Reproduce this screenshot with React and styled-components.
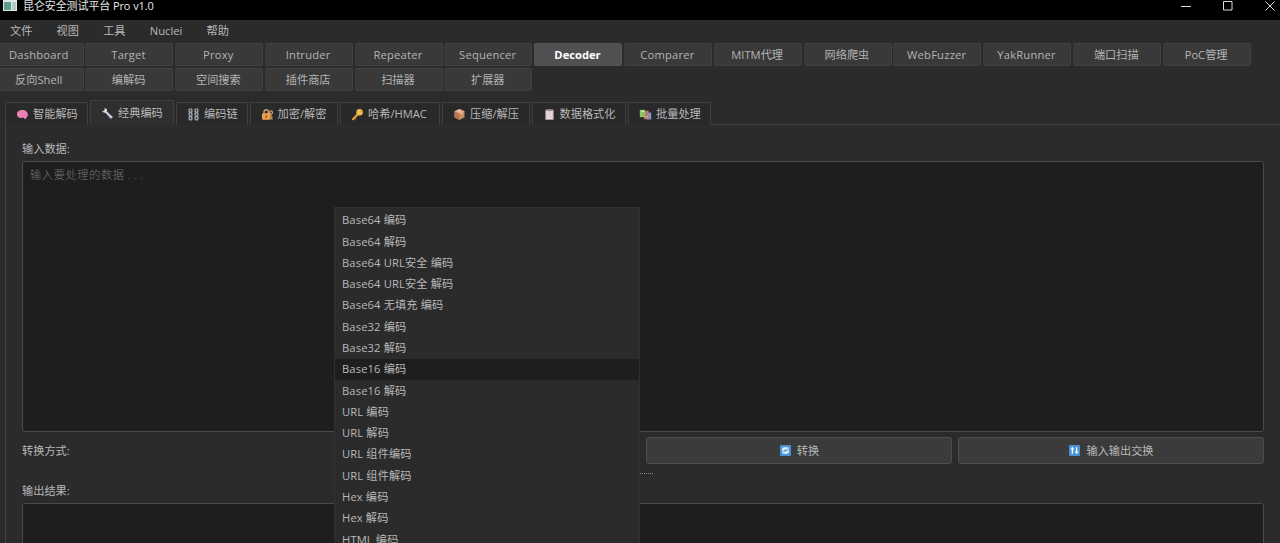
import React from "react";
import styled, { createGlobalStyle } from "styled-components";

const GlobalStyle = createGlobalStyle`
  * {
    box-sizing: border-box;
  }
  body {
    margin: 0;
    background: #2b2b2b;
    overflow: hidden;
  }
`;

const Window = styled.div`
  width: 1280px;
  height: 543px;
  overflow: hidden;
  display: flex;
  flex-direction: column;
  background: #2b2b2b;
  color: #b8b8b8;
  font-family: "Open Sans", "Noto Sans CJK SC", sans-serif;
  font-size: 11.2px;
  line-height: 16px;
  white-space: nowrap;
`;

const TitleBar = styled.header`
  height: 20px;
  flex-shrink: 0;
  padding: 0 5px 8px 3px;
  display: flex;
  align-items: center;
  background: #000;
  color: #e6e6e6;
  font-size: 11px;
  line-height: 12px;
`;

const Title = styled.span`
  margin-left: 6px;
  flex: 1;
  letter-spacing: -0.1px;
`;

const WindowButtons = styled.div`
  display: flex;
  gap: 32px;
`;

const MenuBar = styled.nav`
  height: 23px;
  flex-shrink: 0;
  display: flex;
  align-items: center;
  gap: 24.2px;
  padding: 0 0 1px 10px;
`;

const TabGrid = styled.div`
  display: grid;
  grid-template-columns: repeat(14, 88px);
  grid-auto-rows: 23.4px;
  gap: 1.4px 1.8px;
  margin-left: -4.5px;
  flex-shrink: 0;
`;

const ModuleTab = styled.div`
  display: flex;
  align-items: center;
  justify-content: center;
  padding: 1px 1.5px 0 0;
  border: 1px solid ${(p) => (p.$active ? "#555" : "#414141")};
  border-left-color: ${(p) => (p.$active ? "#555" : "#393939")};
  border-radius: 2px;
  background: ${(p) => (p.$active ? "#505050" : "#393939")};
  color: ${(p) => (p.$active ? "#fff" : "#b4b4b4")};
  font-weight: ${(p) => (p.$active ? 700 : 400)};
  letter-spacing: ${(p) => p.$spacing || 0}px;
`;

const SubTabs = styled.div`
  display: flex;
  align-items: flex-end;
  height: 33.8px;
  flex-shrink: 0;
  padding-left: 5px;
  gap: 2px;
`;

const SubTab = styled.div`
  width: ${(p) => p.$width}px;
  height: ${(p) => (p.$active ? 25 : 23)}px;
  padding: ${(p) => (p.$active ? "1px 0 0 10px" : "1px 0 0 10px")};
  display: flex;
  align-items: center;
  gap: 4px;
  border: 1px solid #3e3e3e;
  border-bottom: 0;
  background: ${(p) => (p.$active ? "#2f2f2f" : "#292929")};
  svg {
    flex-shrink: 0;
  }
`;

const TabRule = styled.div`
  flex: 1;
  margin-left: -2px;
  height: 1px;
  background: #444;
`;

const Pane = styled.main`
  flex: 1;
  min-height: 0;
  display: flex;
  flex-direction: column;
  margin-left: 5px;
  padding: 16px 16px 0;
  border-left: 1px solid #444;
`;

const Label = styled.div`
  flex-shrink: 0;
  height: 16px;
  margin-bottom: 4px;
`;

const TextBox = styled.div`
  flex-shrink: 0;
  height: ${(p) => p.$height}px;
  padding: 5px 7px;
  border: 1px solid #4a4a4a;
  border-radius: 3px;
  background: #1e1e1e;
  color: #757575;
  font-weight: 300;
  letter-spacing: 0.65px;
`;

const Dots = styled.span`
  letter-spacing: 3.6px;
  margin-left: 3px;
`;

const Controls = styled.div`
  display: grid;
  grid-template-columns: repeat(4, 1fr);
  gap: 6px;
  height: 27px;
  flex-shrink: 0;
  margin-top: 5px;
  align-items: center;
`;

const Caption = styled.span`
  padding-top: 1px;
`;

const ComboBox = styled.div`
  height: 27px;
  border: 1px solid #4a4a4a;
  position: relative;
`;

const Popup = styled.div`
  position: absolute;
  z-index: 2;
  left: -1px;
  top: -231px;
  width: 306px;
  padding: 1.6px 0;
  border: 1px solid #303030;
  background: #2b2b2b;
`;

const Option = styled.div`
  height: 21.3px;
  padding-left: 7px;
  display: flex;
  align-items: center;
  letter-spacing: 0.13px;
  background: ${(p) => (p.$active ? "#1e1e1e" : "transparent")};
`;

const Button = styled.div`
  height: 27px;
  display: flex;
  align-items: center;
  justify-content: center;
  gap: 5px;
  padding-top: 1px;
  border: 1px solid #4e4e4e;
  border-radius: 3px;
  background: #3b3b3b;
`;

const Splitter = styled.div`
  height: 19px;
  flex-shrink: 0;
  display: flex;
  align-items: center;
  justify-content: center;
  gap: 1px;
`;

const Grip = styled.i`
  width: 1px;
  height: 1px;
  background: #858585;
`;

const Svg = ({ children }) => (
  <svg width="13" height="13" viewBox="0 0 13 13" fill="none">
    {children}
  </svg>
);

const icons = {
  brain: (
    <Svg>
      <path d="M1 6.5C.8 3.4 3.5 1.9 6.3 2c3 0 5.4 2 5.6 4.7.1 1.3-.4 2-1.3 2.3l-.5 1.8-1.5.2-1-1.5C4.5 10.4 1.2 9.9 1 6.5Z" fill="#ee83b5" />
      <path d="M3 5.8c1-.9 2-.4 2.5.3M6.2 3.8c.6 1 1.6 1.1 2.4.8M7 7.4c1 .3 2 .1 2.8-.8" stroke="#d96fa4" strokeWidth=".6" />
    </Svg>
  ),
  wrench: (
    <Svg>
      <path d="m4 4 5.4 5.4" stroke="#c9ced9" strokeWidth="2.2" strokeLinecap="round" />
      <path d="M1.2 3.5 3 4.2l1-1L3.3 1.4c1.8-.3 3 .9 2.7 2.6L4.4 5.6C2.8 5.9 1.2 5 1.2 3.5Z" fill="#d9dce5" />
      <circle cx="10" cy="10" r="1.6" fill="#c1c7d5" />
    </Svg>
  ),
  chains: (
    <Svg>
      {[3.5, 9.5].map((x) => (
        <g key={x} stroke="#a9b4bf" strokeWidth="1.2">
          <rect x={x - 1.4} y="1" width="2.8" height="3.2" rx=".8" />
          <rect x={x - 1.4} y="5" width="2.8" height="3" rx=".8" />
          <rect x={x - 1.4} y="8.8" width="2.8" height="3" rx=".8" />
        </g>
      ))}
    </Svg>
  ),
  lock: (
    <Svg>
      <path d="M3 6V4a2.2 2.2 0 0 1 4.4 0v2" stroke="#c7a077" strokeWidth="1.4" />
      <rect x="1" y="5.2" width="8.4" height="6.6" rx="1" fill="#eda34c" />
      <path d="M5.2 7.3v2.4" stroke="#7c4b25" strokeWidth="1.3" />
      <circle cx="10" cy="4.4" r="1.5" stroke="#d7a16c" strokeWidth="1.2" />
      <path d="M10 6v5.4M10 9h1.7M10 11h1.7" stroke="#d7a16c" strokeWidth="1.1" />
    </Svg>
  ),
  key: (
    <Svg>
      <path d="M7 6 2 11.2" stroke="#e5a93b" strokeWidth="2" strokeLinecap="round" />
      <path d="m3 9.5 1.7 1.6" stroke="#e5a93b" />
      <circle cx="8.6" cy="4.2" r="3.2" fill="#f3bf52" />
      <circle cx="9.8" cy="3" r=".6" fill="#a87a2c" />
    </Svg>
  ),
  box: (
    <Svg>
      <path d="m6.5 1 5 2.3v6L6.5 12l-5-2.7v-6Z" fill="#c98b68" />
      <path d="m1.5 3.3 5 2.4V12l-5-2.7Z" fill="#b77553" />
      <path d="m1.5 3.3 5-2.3 5 2.3-5 2.4Z" fill="#dda782" />
      <path d="m4 2.2 5 2.4v2" stroke="#f0cfad" strokeWidth="1" />
    </Svg>
  ),
  clipboard: (
    <Svg>
      <rect x="2.2" y="1.6" width="8.6" height="10.4" rx=".8" fill="#b58e91" />
      <path d="M3.2 2.8h6.6v8.2H3.2Z" fill="#e4dce4" />
      <path d="M4.7 1h3.6v2.2H4.7Z" fill="#8e8490" />
      <path d="M4.4 5.3h4.2M4.4 7h4.2M4.4 8.7h4.2" stroke="#cfc4d0" strokeWidth=".6" />
    </Svg>
  ),
  books: (
    <Svg>
      <path d="M7.5 4.5h4.7v7H7.5Z" fill="#7898d0" />
      <path d="m4.5 3.2 5-.6.6 8.3-5 .4Z" fill="#bd747d" />
      <path d="M.8 1.8h5.4v7.4H.8Z" fill="#8fc463" />
      <path d="M2 3.3h3M7.3 8.9l1.5-.1" stroke="#e1edd0" strokeWidth="1" />
    </Svg>
  ),
  refresh: (
    <Svg>
      <rect x="1" y="1" width="11" height="11" rx="1" fill="#4b92d6" />
      <rect x="3" y="3" width="7" height="7" rx="2" fill="#a9cff2" />
      <path d="M3.6 6c.3-1.8 3.2-2.6 4.9-1.3M9.4 7c-.3 1.8-3.2 2.6-4.9 1.3" stroke="#eef7ff" strokeWidth="1.2" />
      <path d="m4.8 7.6 3.4-2.2" stroke="#3f86c9" strokeWidth="1" />
    </Svg>
  ),
  swap: (
    <Svg>
      <rect x="1" y="1" width="11" height="11" rx="1" fill="#4b92d6" />
      <path d="M4.4 9.8V4.5M8.6 3.2v5.3" stroke="#eef7ff" strokeWidth="1.4" />
      <path d="m2.3 5.4 2.1-2.6 2.1 2.6ZM6.5 7.6l2.1 2.6 2.1-2.6Z" fill="#eef7ff" />
    </Svg>
  ),
};

const menus = ["文件", "视图", "工具", "Nuclei", "帮助"];

const modules = [
  "Dashboard",
  "Target",
  "Proxy",
  "Intruder",
  "Repeater",
  "Sequencer",
  "Decoder",
  "Comparer",
  "MITM代理",
  "网络爬虫",
  "WebFuzzer",
  "YakRunner",
  "端口扫描",
  "PoC管理",
  "反向Shell",
  "编解码",
  "空间搜索",
  "插件商店",
  "扫描器",
  "扩展器",
];

const subTabs = [
  { icon: "brain", text: "智能解码", width: 83 },
  { icon: "wrench", text: "经典编码", width: 84 },
  { icon: "chains", text: "编码链", width: 71.5 },
  { icon: "lock", text: "加密/解密", width: 88.5 },
  { icon: "key", text: "哈希/HMAC", width: 100 },
  { icon: "box", text: "压缩/解压", width: 87.5 },
  { icon: "clipboard", text: "数据格式化", width: 94.5 },
  { icon: "books", text: "批量处理", width: 82.5 },
];

const options = [
  "Base64 编码",
  "Base64 解码",
  "Base64 URL安全 编码",
  "Base64 URL安全 解码",
  "Base64 无填充 编码",
  "Base32 编码",
  "Base32 解码",
  "Base16 编码",
  "Base16 解码",
  "URL 编码",
  "URL 解码",
  "URL 组件编码",
  "URL 组件解码",
  "Hex 编码",
  "Hex 解码",
  "HTML 编码",
];

const AppIcon = () => (
  <svg width="14" height="12" viewBox="0 0 14 12">
    <path d="M0 0h14v11H0Z" fill="#dce8e5" />
    <path d="M1 2h7v8H1Z" fill="#5c9c8a" />
    <path d="M9 2h4v8H9Z" fill="#b7c9c5" />
  </svg>
);

export default function App() {
  return (
    <Window>
      <GlobalStyle />
      <TitleBar>
        <AppIcon />
        <Title>昆仑安全测试平台 Pro v1.0</Title>
        <WindowButtons>
          <svg width="10" height="10" stroke="#ddd" fill="none">
            <path d="M0 5.5h10" />
          </svg>
          <svg width="10" height="10" stroke="#ddd" fill="none">
            <path d="M.5.5h8.5v8.5H.5Z" />
          </svg>
          <svg width="10" height="10" stroke="#ddd" fill="none">
            <path d="m.5.5 9 9M9.5.5l-9 9" />
          </svg>
        </WindowButtons>
      </TitleBar>
      <MenuBar>
        {menus.map((m) => (
          <span key={m}>{m}</span>
        ))}
      </MenuBar>
      <TabGrid>
        {modules.map((m) => (
          <ModuleTab key={m} $active={m === "Decoder"} $spacing={/^[A-Za-z]+$/.test(m) && m !== "Decoder" ? 0.2 : 0}>
            {m}
          </ModuleTab>
        ))}
      </TabGrid>
      <SubTabs>
        {subTabs.map((t) => (
          <SubTab key={t.text} $width={t.width} $active={t.icon === "wrench"}>
            {icons[t.icon]}
            {t.text}
          </SubTab>
        ))}
        <TabRule />
      </SubTabs>
      <Pane>
        <Label>输入数据:</Label>
        <TextBox $height={271}>
          输入要处理的数据<Dots>...</Dots>
        </TextBox>
        <Controls>
          <Caption>转换方式:</Caption>
          <ComboBox>
            <Popup>
              {options.map((o) => (
                <Option key={o} $active={o === "Base16 编码"}>
                  {o}
                </Option>
              ))}
            </Popup>
          </ComboBox>
          <Button>
            {icons.refresh}
            转换
          </Button>
          <Button>
            {icons.swap}
            输入输出交换
          </Button>
        </Controls>
        <Splitter>
          {Array.from({ length: 10 }, (_, i) => (
            <Grip key={i} />
          ))}
        </Splitter>
        <Label>输出结果:</Label>
        <TextBox $height={60} />
      </Pane>
    </Window>
  );
}
